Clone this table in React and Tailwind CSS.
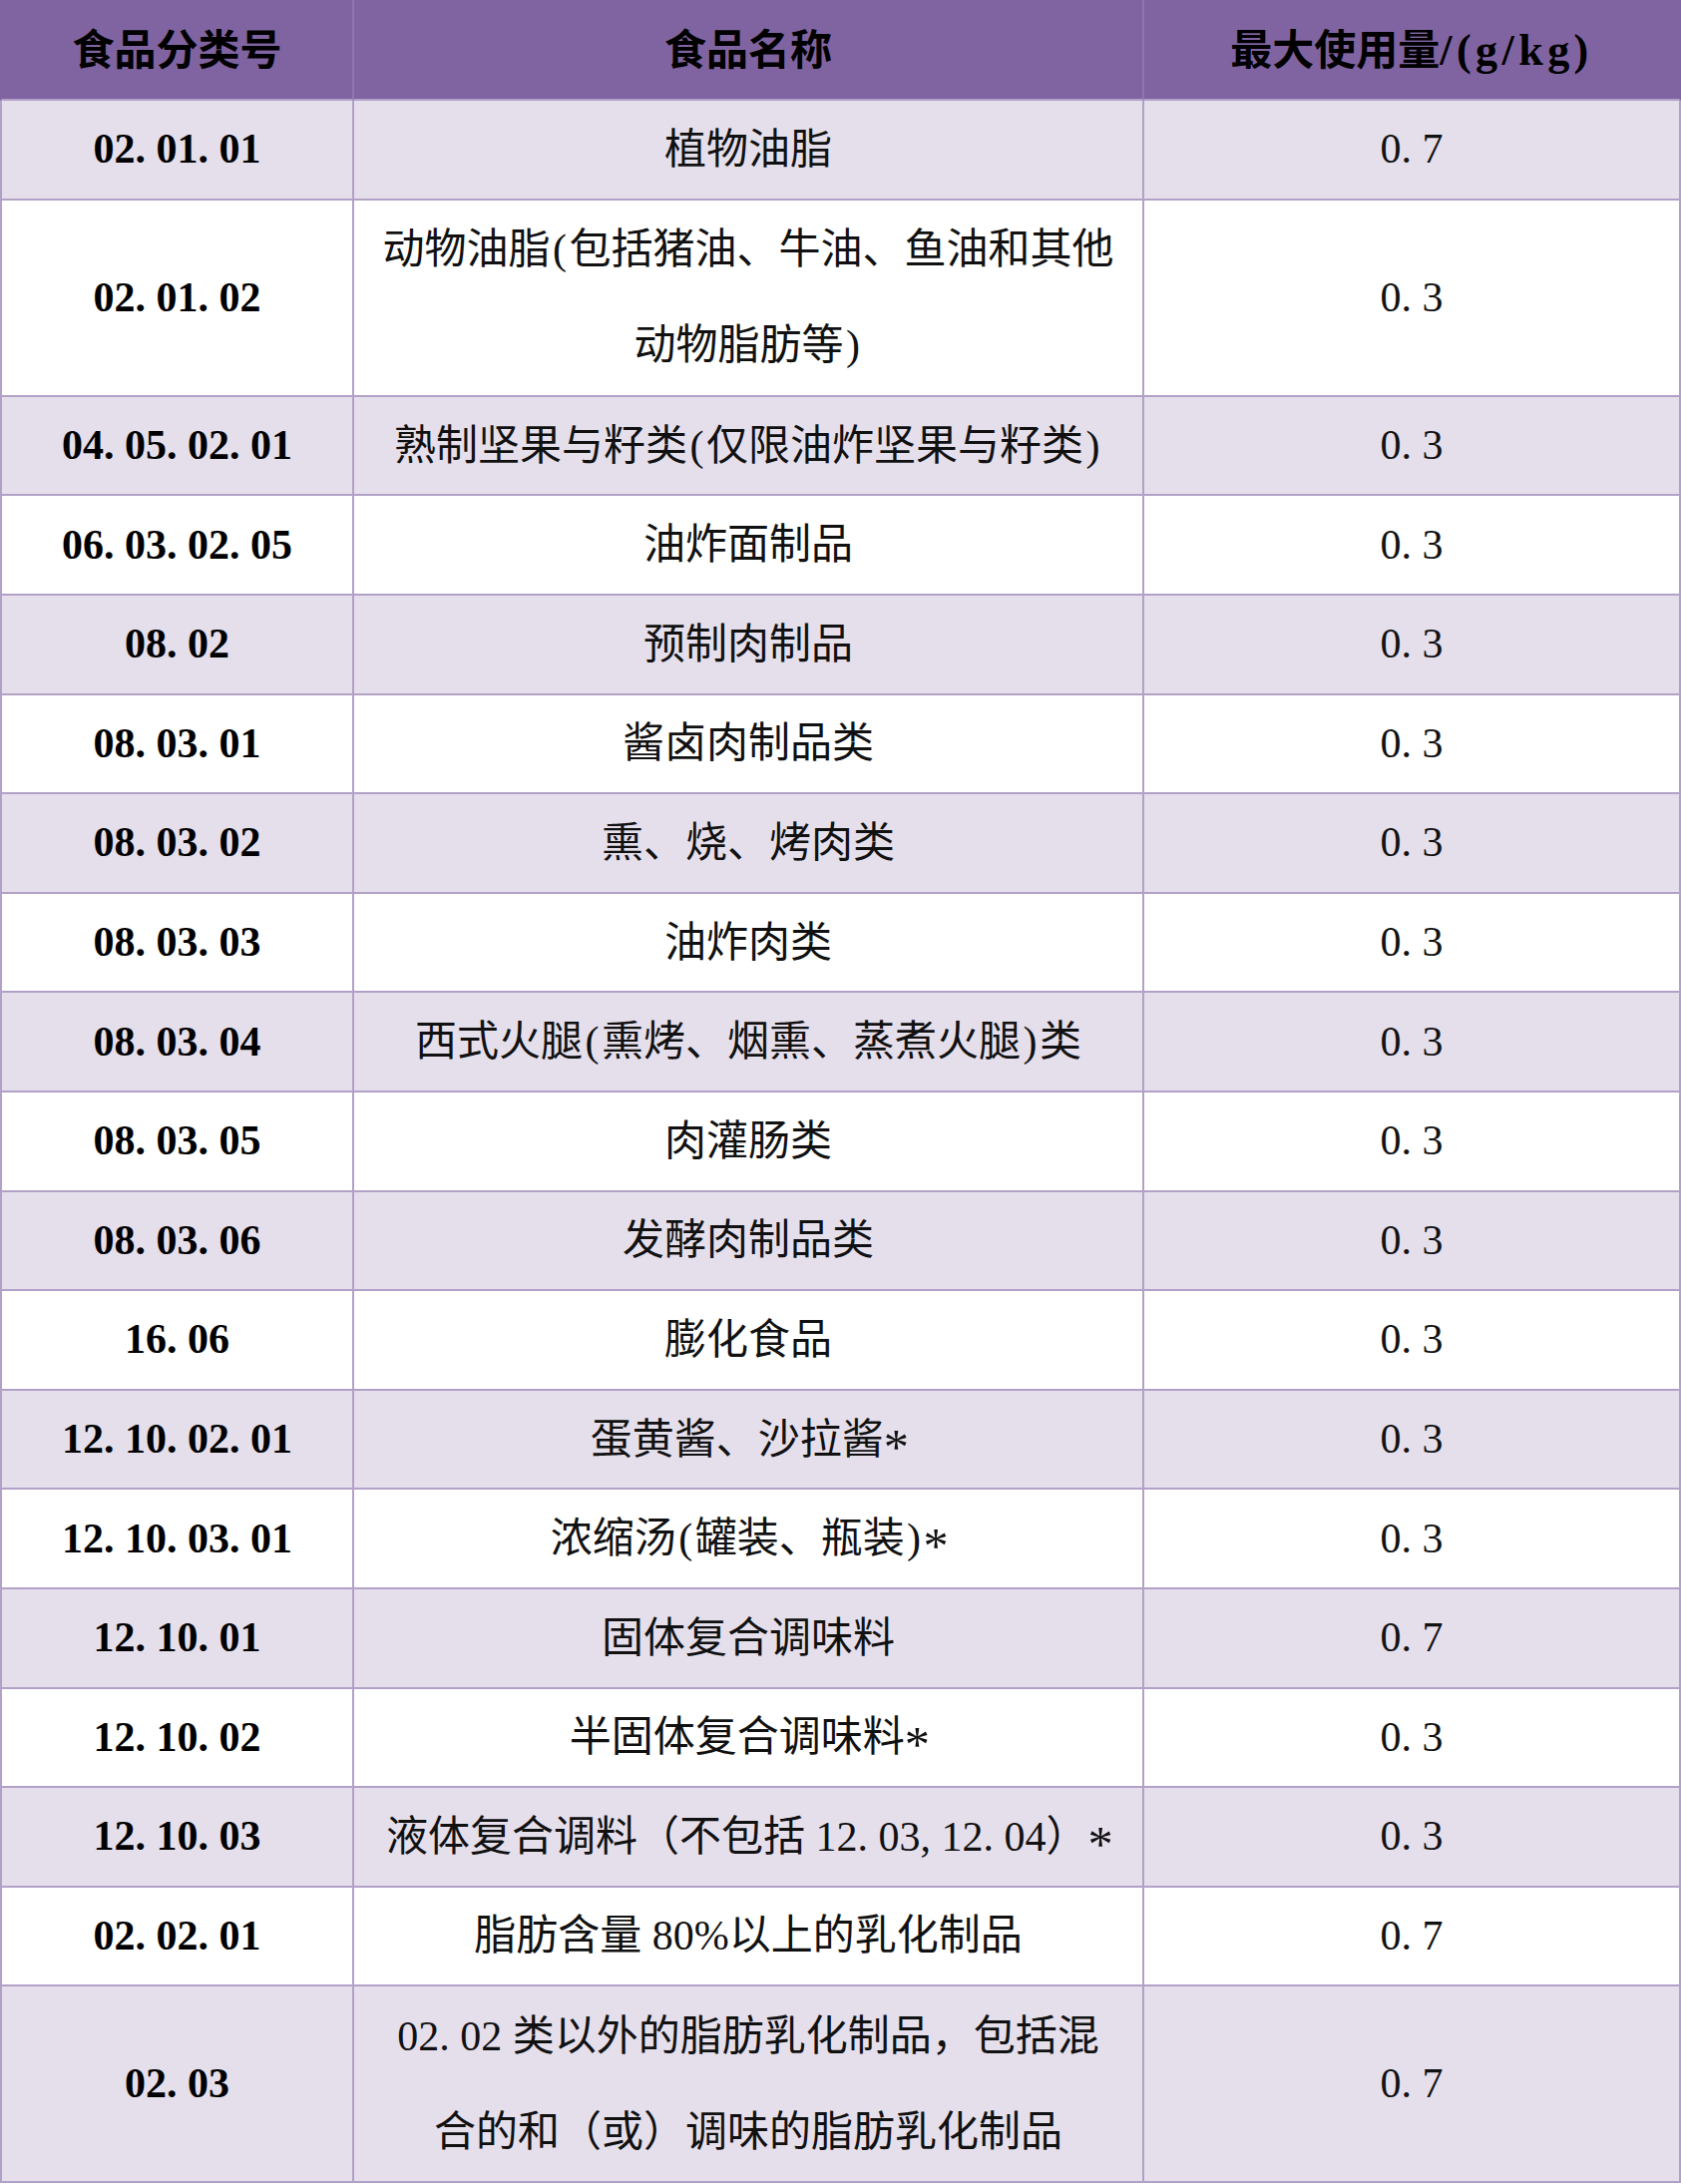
import React from "react";

const rows = [
  { code: "02.01.01", name: ["植物油脂"], val: "0.7" },
  { code: "02.01.02", name: ["动物油脂(包括猪油、牛油、鱼油和其他", "动物脂肪等)"], val: "0.3" },
  { code: "04.05.02.01", name: ["熟制坚果与籽类(仅限油炸坚果与籽类)"], val: "0.3" },
  { code: "06.03.02.05", name: ["油炸面制品"], val: "0.3" },
  { code: "08.02", name: ["预制肉制品"], val: "0.3" },
  { code: "08.03.01", name: ["酱卤肉制品类"], val: "0.3" },
  { code: "08.03.02", name: ["熏、烧、烤肉类"], val: "0.3" },
  { code: "08.03.03", name: ["油炸肉类"], val: "0.3" },
  { code: "08.03.04", name: ["西式火腿(熏烤、烟熏、蒸煮火腿)类"], val: "0.3" },
  { code: "08.03.05", name: ["肉灌肠类"], val: "0.3" },
  { code: "08.03.06", name: ["发酵肉制品类"], val: "0.3" },
  { code: "16.06", name: ["膨化食品"], val: "0.3" },
  { code: "12.10.02.01", name: ["蛋黄酱、沙拉酱*"], val: "0.3" },
  { code: "12.10.03.01", name: ["浓缩汤(罐装、瓶装)*"], val: "0.3" },
  { code: "12.10.01", name: ["固体复合调味料"], val: "0.7" },
  { code: "12.10.02", name: ["半固体复合调味料*"], val: "0.3" },
  { code: "12.10.03", name: ["液体复合调料（不包括 12.03,12.04）*"], val: "0.3" },
  { code: "02.02.01", name: ["脂肪含量 80%以上的乳化制品"], val: "0.7" },
  { code: "02.03", name: ["02.02 类以外的脂肪乳化制品，包括混", "合的和（或）调味的脂肪乳化制品"], val: "0.7" },
];

function Fmt({ text }) {
  const parts = [];
  let buf = "";
  [...text].forEach((ch, i) => {
    if (ch === "." || ch === ",") {
      if (buf) parts.push(buf);
      buf = "";
      parts.push(
        <span key={"p" + i} className="inline-block w-[0.5em] text-left">
          {ch}
        </span>
      );
    } else if (ch === "*") {
      if (buf) parts.push(buf);
      buf = "";
      parts.push(
        <span key={"a" + i} className="inline-block relative top-[0.2em] text-[1.2em] leading-none w-[0.45em] text-center">
          {ch}
        </span>
      );
    } else if (ch === "(" || ch === ")") {
      if (buf) parts.push(buf);
      buf = "";
      parts.push(
        <span key={"b" + i} className="inline-block w-[0.45em] text-center">
          {ch}
        </span>
      );
    } else {
      buf += ch;
    }
  });
  if (buf) parts.push(buf);
  return <>{parts}</>;
}

const cellBase =
  "flex items-center justify-center text-center border-r-2 border-b-2 border-[#B2A1C7]";

export default function App() {
  return (
    <div
      className="w-[1685px] bg-white text-black text-[42px]"
      style={{ fontFamily: "'Liberation Serif', 'Noto Sans CJK SC', serif" }}
    >
      <div className="grid grid-cols-[355px_792px_538px] h-[101px] bg-[#8064A2] font-bold">
        <div className="flex items-center justify-center pt-[4px] border-l-2 border-r-2 border-b-2 border-l-[#8064A2] border-r-[#8F76B0] border-b-[#B2A1C7]">
          食品分类号
        </div>
        <div className="flex items-center justify-center pt-[4px] border-r-2 border-b-2 border-r-[#8F76B0] border-b-[#B2A1C7]">
          食品名称
        </div>
        <div className="flex items-center justify-center pt-[4px] border-r-2 border-b-2 border-r-[#8064A2] border-b-[#B2A1C7]">
          <span>
            最大使用量<span className="tracking-[0.1em] text-[1.05em]">/(g/kg)</span>
          </span>
        </div>
      </div>
      {rows.map((r, i) => {
        const shaded = i % 2 === 0;
        const dbl = r.name.length > 1;
        return (
          <div
            key={i}
            className={
              "grid grid-cols-[355px_792px_538px] " +
              (dbl ? "h-[197.2px] " : "h-[99.6px] ") +
              (shaded ? "bg-[#E5DFEC]" : "bg-white")
            }
          >
            <div className={cellBase + " border-l-2 font-bold"}>
              <span>
                <Fmt text={r.code} />
              </span>
            </div>
            <div className={cellBase + " flex-col leading-[96px] text-[#111]"}>
              {r.name.map((l, j) => (
                <div key={j} className="whitespace-nowrap">
                  <Fmt text={l} />
                </div>
              ))}
            </div>
            <div className={cellBase + " text-[#111]"}>
              <span>
                <Fmt text={r.val} />
              </span>
            </div>
          </div>
        );
      })}
    </div>
  );
}
